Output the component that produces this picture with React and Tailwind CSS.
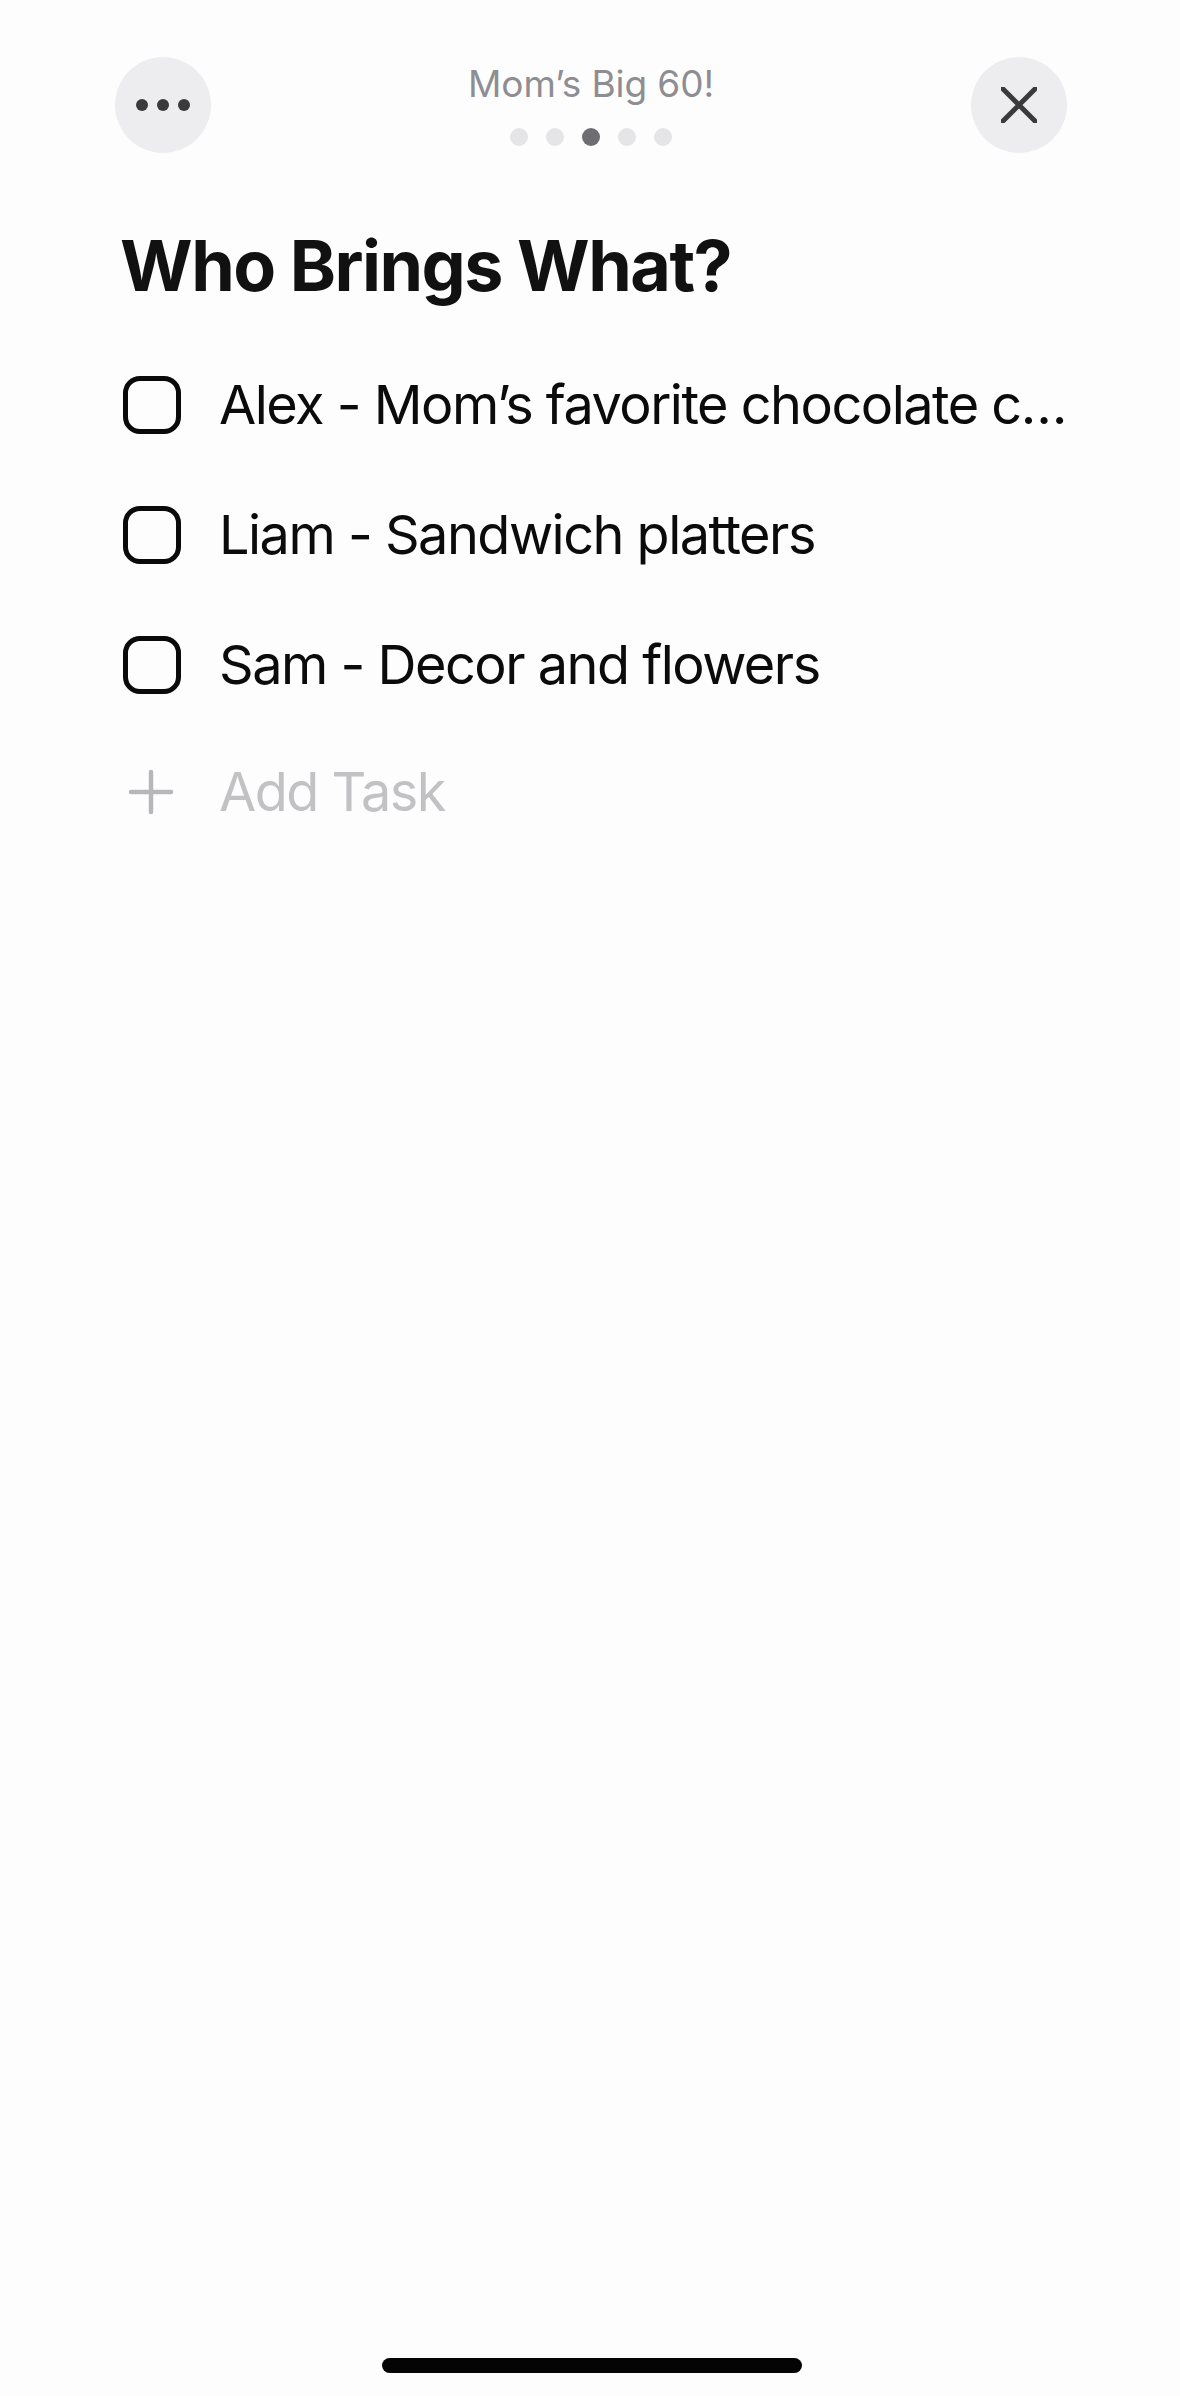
import React from "react";

const font = { fontFamily: "Inter, 'Noto Sans', sans-serif" };

function Checkbox() {
  return (
    <div className="w-[58px] h-[58px] shrink-0 rounded-[17px] border-[5px] border-[#0a0a0a]" />
  );
}

function Row({ text }) {
  return (
    <div className="flex items-center h-[130px]">
      <div className="w-[96px] shrink-0 flex items-center">
        <Checkbox />
      </div>
      <div className="text-[54px] leading-none text-[#0b0b0c] whitespace-nowrap tracking-[-1.5px]">
        {text}
      </div>
    </div>
  );
}

export default function App() {
  return (
    <div
      className="w-[1180px] h-[2396px] bg-[#fefdfe] flex flex-col relative overflow-hidden"
      style={font}
    >
      <div className="flex items-start justify-between pl-[115px] pr-[113px] pt-[57px]">
        <div className="w-[96px] h-[96px] rounded-full bg-[#ededef] flex items-center justify-center gap-[9px]">
          <span className="w-[12px] h-[12px] rounded-full bg-[#3a3a3c]" />
          <span className="w-[12px] h-[12px] rounded-full bg-[#3a3a3c]" />
          <span className="w-[12px] h-[12px] rounded-full bg-[#3a3a3c]" />
        </div>
        <div className="flex flex-col items-center pt-[5px]">
          <div className="text-[37px] leading-[44px] text-[#8e8e92] tracking-[-0.1px]">Mom’s Big 60!</div>
          <div className="flex gap-[18px] mt-[22px]">
            <span className="w-[18px] h-[18px] rounded-full bg-[#e5e5e7]" />
            <span className="w-[18px] h-[18px] rounded-full bg-[#e5e5e7]" />
            <span className="w-[18px] h-[18px] rounded-full bg-[#6e6e70]" />
            <span className="w-[18px] h-[18px] rounded-full bg-[#e5e5e7]" />
            <span className="w-[18px] h-[18px] rounded-full bg-[#e5e5e7]" />
          </div>
        </div>
        <div className="w-[96px] h-[96px] rounded-full bg-[#ededef] flex items-center justify-center">
          <svg width="36" height="36" viewBox="0 0 36 36" fill="none">
            <path d="M1.5 1.5 L34.5 34.5 M34.5 1.5 L1.5 34.5" stroke="#3a3a3c" strokeWidth="5" strokeLinecap="round" />
          </svg>
        </div>
      </div>

      <div className="pl-[123px] pr-[110px] flex flex-col">
        <h1 className="text-[70px] leading-none font-bold text-[#111112] tracking-[-1.5px] mt-[78px] -ml-[3px]">
          Who Brings What?
        </h1>
        <div className="flex flex-col mt-[39px]">
          <Row text="Alex - Mom’s favorite chocolate c…" />
          <Row text="Liam - Sandwich platters" />
          <Row text="Sam - Decor and flowers" />
          <div className="flex items-center h-[124px]">
            <div className="w-[96px] shrink-0 flex items-center pl-[5px]">
              <svg width="46" height="46" viewBox="0 0 46 46" fill="none">
                <path d="M23 3 V43 M3 23 H43" stroke="#b7b7ba" strokeWidth="4.5" strokeLinecap="round" />
              </svg>
            </div>
            <div className="text-[54px] leading-none text-[#c2c2c5] whitespace-nowrap tracking-[-1.5px]">
              Add Task
            </div>
          </div>
        </div>
      </div>

      <div className="absolute left-[382px] bottom-[23px] w-[420px] h-[15px] rounded-full bg-[#050405]" />
    </div>
  );
}
